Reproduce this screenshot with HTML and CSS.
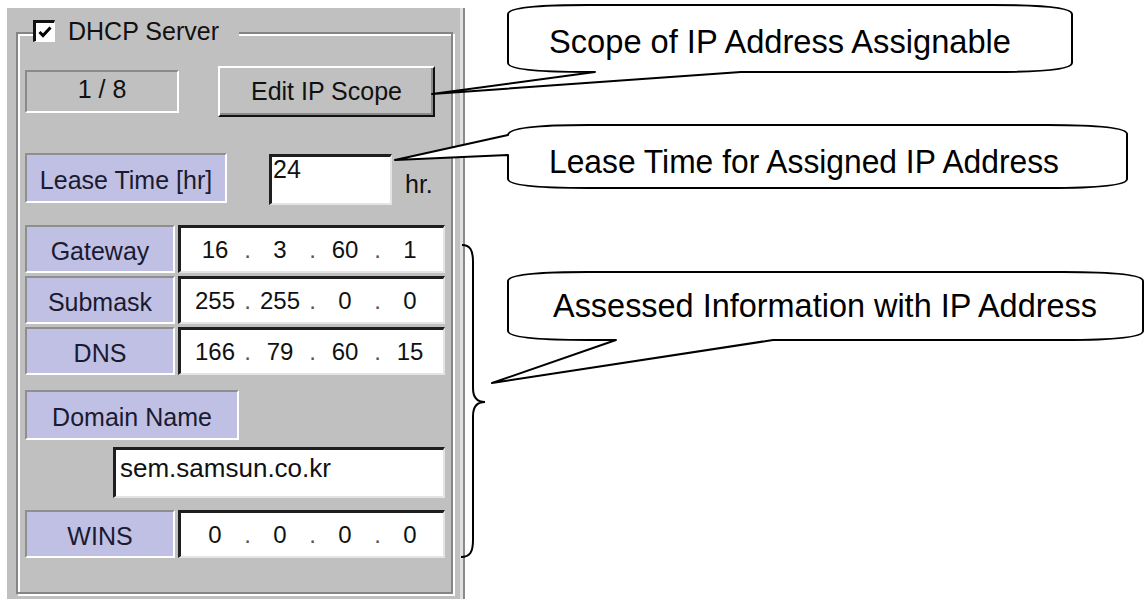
FILE: index.html
```html
<!DOCTYPE html>
<html lang="en">

<head>
    <meta charset="UTF-8">
    <meta name="viewport" content="width=device-width, initial-scale=1.0">
    <title>DHCP Server</title>
    <link rel="stylesheet" href="styles.css">
</head>

<body>
    <div class="page">
        <div class="panel">
            <div class="group">
                <div class="group-title">
                    <span class="check">
                        <svg width="16" height="16" viewBox="0 0 16 16">
                            <path d="M2.5 8 L6 11.5 L13.5 3.5" fill="none" stroke="#000" stroke-width="3" />
                        </svg>
                    </span>
                    <span>DHCP Server</span>
                </div>

                <div class="scope-row">
                    <div class="count">1 / 8</div>
                    <button class="btn">Edit IP Scope</button>
                </div>

                <div class="lease-row">
                    <div class="label lease-label">Lease Time [hr]</div>
                    <div class="field lease-field">24</div>
                    <span class="unit">hr.</span>
                </div>

                <div class="ip-list">
                    <div class="ip-row">
                        <div class="label ip-label">Gateway</div>
                        <div class="field ip"><span>16</span><i>.</i><span>3</span><i>.</i><span>60</span><i>.</i><span>1</span></div>
                    </div>
                    <div class="ip-row">
                        <div class="label ip-label">Submask</div>
                        <div class="field ip"><span>255</span><i>.</i><span>255</span><i>.</i><span>0</span><i>.</i><span>0</span></div>
                    </div>
                    <div class="ip-row">
                        <div class="label ip-label">DNS</div>
                        <div class="field ip"><span>166</span><i>.</i><span>79</span><i>.</i><span>60</span><i>.</i><span>15</span></div>
                    </div>
                </div>

                <div class="label domain-label">Domain Name</div>
                <div class="field domain-field">sem.samsun.co.kr</div>

                <div class="ip-row wins-row">
                    <div class="label ip-label">WINS</div>
                    <div class="field ip"><span>0</span><i>.</i><span>0</span><i>.</i><span>0</span><i>.</i><span>0</span></div>
                </div>
            </div>
        </div>

        <!-- callouts drawn over the dialog -->
        <svg class="notes" width="1145" height="599" viewBox="0 0 1145 599">
            <path class="bubble" d="M588 5 L992 5 Q1072 5 1072 14 L1072 63 Q1072 72 992 72 L741 72 L432 94 L595 72 L588 72 Q508 72 508 63 L508 14 Q508 5 588 5 Z" />
            <text x="549" y="53" textLength="462" lengthAdjust="spacingAndGlyphs">Scope of IP Address Assignable</text>

            <path class="bubble" d="M588 125 L1047 125 Q1127 125 1127 134 L1127 179 Q1127 188 1047 188 L588 188 Q508 188 508 179 L508 155 L395 160 L508 135 Q508 125 588 125 Z" />
            <text x="549" y="173" textLength="510" lengthAdjust="spacingAndGlyphs">Lease Time for Assigned IP Address</text>

            <path class="bubble" d="M588 272 L1063 272 Q1143 272 1143 281 L1143 331 Q1143 340 1063 340 L773 340 L492 383 L616 340 L588 340 Q508 340 508 331 L508 281 Q508 272 588 272 Z" />
            <text x="553" y="317" textLength="544" lengthAdjust="spacingAndGlyphs">Assessed Information with IP Address</text>

            <path class="brace" d="M462 245 C470 245 473 250 473 262 L473 388 C473 398 478 402 485 402 C478 402 473 406 473 416 L473 540 C473 552 470 557 461 557" />
        </svg>
    </div>
</body>

</html>
```

FILE: styles.css
```css
body {
    margin: 0;
    background: #fff;
    font-family: "Liberation Sans", Arial, sans-serif;
    font-size: 25px;
    color: #111;
}

.page {
    position: relative;
    width: 1145px;
    height: 599px;
    overflow: hidden;
}

/* ---- dialog ---- */
.panel {
    margin: 8px 0 0 7px;
    width: 458px;
    height: 591px;
    box-sizing: border-box;
    padding: 24px 0 0 9px;
    background: #c0c0c0;
    border-right: 2px solid #8a8a8a;
    box-shadow: inset -3px 0 0 #e0e0e0;
}

.group {
    position: relative;
    width: 437px;
    height: 562px;
    box-sizing: border-box;
    padding: 32px 6px 0 7px;
    border: 2px solid #858585;
    box-shadow: inset 2px 2px 0 #fff, 2px 2px 0 #fff;
}

.group-title {
    position: absolute;
    left: 15px;
    top: -14px;
    height: 22px;
    display: flex;
    align-items: center;
    gap: 13px;
    padding-right: 20px;
    background: #c0c0c0;
    line-height: 30px;
}

.check {
    width: 22px;
    height: 22px;
    box-sizing: border-box;
    display: flex;
    align-items: center;
    justify-content: center;
    background: #fff;
    border-style: solid;
    border-width: 3px 1px 1px 3px;
    border-color: #111 #fff #fff #111;
}

.scope-row {
    display: flex;
    align-items: center;
    height: 51px;
}

.count {
    width: 154px;
    height: 43px;
    box-sizing: border-box;
    display: flex;
    align-items: center;
    justify-content: center;
    padding-bottom: 4px;
    border: 2px solid;
    border-color: #8a8a8a #fff #fff #8a8a8a;
}

.btn {
    margin-left: 39px;
    width: 217px;
    height: 51px;
    padding: 0;
    font: inherit;
    color: #111;
    background: #c0c0c0;
    border: 2px solid;
    border-color: #fff #111 #111 #fff;
    box-shadow: inset -2px -2px 0 #8a8a8a;
}

.label {
    box-sizing: border-box;
    display: flex;
    align-items: center;
    justify-content: center;
    padding-top: 4px;
    background: #c0c0e4;
    color: #1a1a30;
    line-height: 30px;
    border: 2px solid;
    border-color: #8e8e8e #fff #fff #8e8e8e;
}

.field {
    box-sizing: border-box;
    background: #fff;
    color: #111;
    border-style: solid;
    border-width: 3px 2px 2px 3px;
    border-color: #1e1e1e #e4e4e4 #e4e4e4 #1e1e1e;
}

.lease-row {
    display: flex;
    align-items: flex-start;
    margin-top: 36px;
    height: 52px;
}

.lease-label {
    width: 202px;
    height: 50px;
}

.lease-field {
    margin: 1px 0 0 42px;
    width: 123px;
    height: 51px;
    line-height: 24px;
    padding-left: 1px;
}

.unit {
    margin-left: 13px;
    padding-top: 17px;
    line-height: 29px;
}

.ip-list {
    margin-top: 20px;
    display: flex;
    flex-direction: column;
    gap: 3px;
}

.ip-row {
    display: flex;
    gap: 3px;
    height: 48px;
}

.ip-label {
    width: 150px;
}

.ip {
    width: 267px;
    display: grid;
    grid-template-columns: 56px 9px 56px 9px 56px 9px 56px;
    align-items: center;
    justify-items: center;
    padding-left: 6px;
    font-size: 24px;
}

.ip i {
    font-style: normal;
    color: #555;
}

.domain-label {
    margin-top: 15px;
    width: 214px;
    height: 50px;
}

.domain-field {
    margin: 7px 0 0 88px;
    width: 332px;
    height: 51px;
    padding: 5px 0 0 4px;
    font-size: 26px;
    line-height: 26px;
}

.wins-row {
    margin-top: 12px;
}

/* ---- callouts ---- */
.notes {
    position: absolute;
    top: 0;
    left: 0;
    pointer-events: none;
}

.bubble {
    fill: #fff;
    stroke: #000;
    stroke-width: 2;
    stroke-linejoin: round;
}

.brace {
    fill: none;
    stroke: #000;
    stroke-width: 2;
}

.notes text {
    font-family: "Liberation Sans", Arial, sans-serif;
    font-size: 34px;
    fill: #000;
}
```
